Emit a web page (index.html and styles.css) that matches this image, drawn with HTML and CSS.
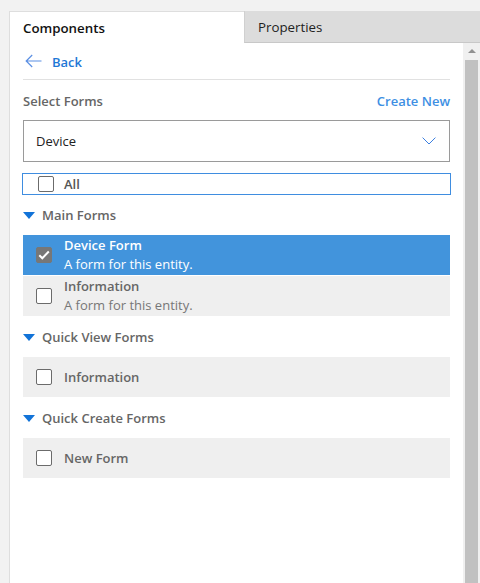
FILE: index.html
```html
<!DOCTYPE html>
<html>
<head>
<meta charset="utf-8">
<link rel="stylesheet" href="styles.css">
</head>
<body>
<div class="panel">
  <div class="tabs">
    <div class="tab tab-active">Components</div>
    <div class="tab tab-inactive">Properties</div>
  </div>
  <div class="main">
    <div class="content">
      <div class="back-row">
        <svg class="back-arrow" width="17" height="14" viewBox="0 0 17 14">
          <path d="M16.5 7H1.2M7.2 1L1.2 7l6 6" fill="none" stroke="#5b8fe3" stroke-width="1.2"/>
        </svg>
        <span class="back-text">Back</span>
      </div>
      <div class="select-row">
        <span class="select-label">Select Forms</span>
        <span class="create-new">Create New</span>
      </div>
      <div class="dropdown">
        <span class="dropdown-value">Device</span>
        <svg class="chevron" width="14" height="8" viewBox="0 0 14 8">
          <path d="M0.6 0.6L7 7l6.4-6.4" fill="none" stroke="#3b7fe0" stroke-width="1"/>
        </svg>
      </div>
      <div class="all-row">
        <span class="checkbox"></span>
        <span class="all-text">All</span>
      </div>

      <div class="group-heading"><span class="caret"></span><span>Main Forms</span></div>
      <div class="form-row selected">
        <span class="checkbox checked">
          <svg width="12" height="10" viewBox="0 0 12 10"><path d="M1.3 5.2l3 3L10.8 1.5" fill="none" stroke="#fff" stroke-width="2"/></svg>
        </span>
        <div class="form-text">
          <div class="form-title">Device Form</div>
          <div class="form-sub">A form for this entity.</div>
        </div>
      </div>
      <div class="form-row">
        <span class="checkbox"></span>
        <div class="form-text">
          <div class="form-title">Information</div>
          <div class="form-sub">A form for this entity.</div>
        </div>
      </div>

      <div class="group-heading"><span class="caret"></span><span>Quick View Forms</span></div>
      <div class="form-row">
        <span class="checkbox"></span>
        <div class="form-text">
          <div class="form-title">Information</div>
        </div>
      </div>

      <div class="group-heading"><span class="caret"></span><span>Quick Create Forms</span></div>
      <div class="form-row">
        <span class="checkbox"></span>
        <div class="form-text">
          <div class="form-title">New Form</div>
        </div>
      </div>
    </div>
    <div class="scrollbar">
      <div class="scroll-up"></div>
      <div class="scroll-thumb"></div>
    </div>
  </div>
</div>
</body>
</html>
```

FILE: styles.css
```css
html, body {
  margin: 0;
  padding: 0;
  height: 100%;
  overflow: hidden;
}
body {
  background: #f2f2f2;
  font-family: "Open Sans", "Noto Sans", "Liberation Sans", sans-serif;
  font-size: 13px;
  color: #333;
}
.panel {
  margin: 11px 0 0 9px;
  height: calc(100% - 11px);
  background: #fff;
  border-left: 1px solid #dedede;
  border-top: 1px solid #dedede;
  display: flex;
  flex-direction: column;
  box-sizing: border-box;
}
.tabs {
  display: flex;
  height: 31px;
  flex: none;
}
.tab {
  display: flex;
  align-items: center;
  font-size: 13.3px;
}
.tab-active {
  width: 234px;
  padding-left: 13px;
  box-sizing: border-box;
  font-weight: 600;
  color: #111;
  background: #fff;
}
.tab-inactive {
  flex: 1;
  padding-left: 13px;
  background: #dcdcdc;
  color: #222;
  border-left: 1px solid #d0d0d0;
  border-bottom: 1px solid #c8c8c8;
  margin-top: -1px;
}
.main {
  flex: 1;
  display: flex;
  min-height: 0;
}
.content {
  width: 427px;
  flex: none;
  padding: 0 0 0 13px;
}
.back-row {
  height: 36px;
  display: flex;
  align-items: center;
  border-bottom: 1px solid #e1e1e1;
}
.back-arrow {
  margin-left: 2px;
  margin-right: 10px;
}
.back-text {
  color: #1f78d6;
  font-weight: 600;
  padding-top: 1px;
}
.select-row {
  display: flex;
  justify-content: space-between;
  align-items: center;
  height: 20px;
  margin-top: 11px;
}
.select-label {
  color: #666;
  font-weight: 600;
}
.create-new {
  color: #3d8fe3;
  font-weight: 600;
}
.dropdown {
  margin-top: 9px;
  height: 42px;
  box-sizing: border-box;
  border: 1px solid #9a9a9a;
  display: flex;
  align-items: center;
  justify-content: space-between;
  padding: 0 13px 0 12px;
}
.dropdown-value {
  color: #222;
}
.all-row {
  margin: 11px -1px 0 -1px;
  height: 22px;
  box-sizing: border-box;
  border: 1px solid #3f8de0;
  display: flex;
  align-items: center;
  padding-left: 15px;
}
.all-text {
  margin-left: 10px;
  color: #555;
  font-weight: 600;
}
.checkbox {
  width: 16px;
  height: 16px;
  box-sizing: border-box;
  border: 1px solid #6b6b6b;
  border-radius: 2px;
  background: #fff;
  flex: none;
  display: flex;
  align-items: center;
  justify-content: center;
}
.checkbox.checked {
  background: #777;
  border-color: #777;
}
.group-heading {
  height: 40px;
  display: flex;
  align-items: center;
  color: #666;
  font-weight: 600;
}
.caret {
  width: 0;
  height: 0;
  border-left: 6px solid transparent;
  border-right: 6px solid transparent;
  border-top: 7px solid #1273d8;
  margin-right: 7px;
}
.form-row {
  min-height: 40px;
  margin-bottom: 1px;
  background: #efefef;
  display: flex;
  align-items: center;
  padding-left: 13px;
  box-sizing: border-box;
}
.form-row.selected {
  background: #4294dc;
}
.form-text {
  margin-left: 12px;
  line-height: 19px;
}
.form-title {
  font-weight: 600;
  color: #666;
}
.form-sub {
  color: #777;
}
.selected .form-title,
.selected .form-sub {
  color: #fff;
}
.scrollbar {
  width: 17px;
  flex: none;
  margin-left: 13px;
  background: #f0f0f0;
  display: flex;
  flex-direction: column;
  align-items: center;
}
.scroll-up {
  margin-top: 6px;
  width: 0;
  height: 0;
  border-left: 4px solid transparent;
  border-right: 4px solid transparent;
  border-bottom: 4px solid #909090;
}
.scroll-thumb {
  margin-top: 7px;
  width: 13px;
  flex: 1;
  background: #c1c1c1;
}
```
